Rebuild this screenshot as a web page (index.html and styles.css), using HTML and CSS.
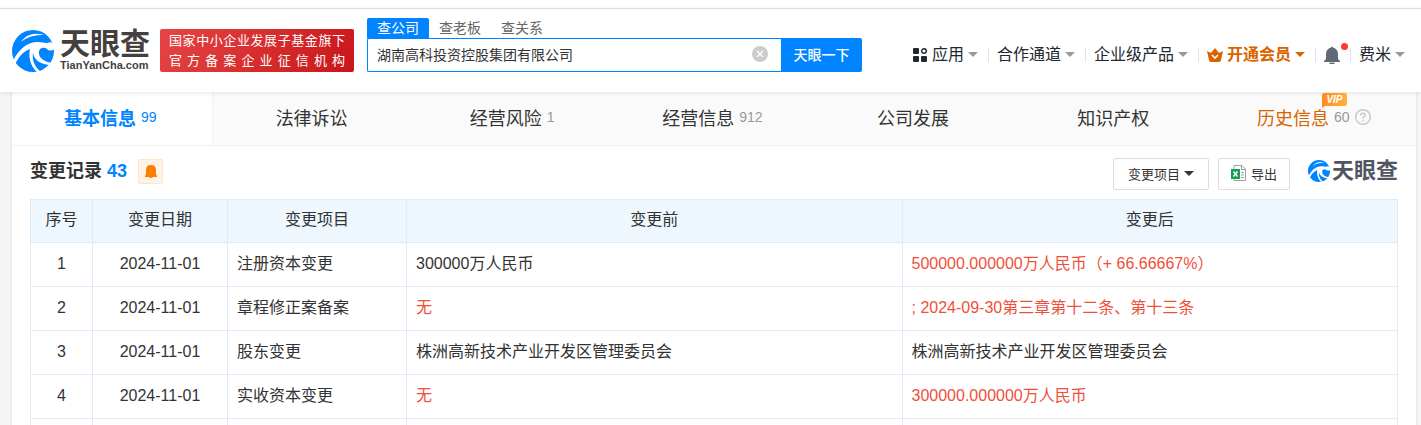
FILE: index.html
```
<!DOCTYPE html>
<html lang="zh-CN">

<head>
    <meta charset="UTF-8">
    <meta name="viewport" content="width=device-width, initial-scale=1.0">
    <title>天眼查</title>
    <link rel="stylesheet" href="styles.css">
</head>

<body>
    <!-- 公共 logo 图形 -->
    <svg class="sprite" aria-hidden="true">
        <symbol id="logo-mark" viewBox="0 0 42 42">
            <circle cx="21" cy="21" r="21" fill="#0084ff" />
            <path d="M9 12C14 4 23 2 32 5C24 5 16 6 9 12Z" fill="#fff" />
            <path d="M0 33C6 20 14 12 26 12C31 12 35 14 38 12L43 14V19C40 21 37 21 35 19C31 16 26 19 27 24C28 29 33 32 41 33L39 35C29 35 22 30 21 23C20 31 23 37 29 42L26 43C19 37 16 28 18 19C12 21 6 27 3 35Z" fill="#fff" />
        </symbol>
    </svg>

    <header class="header">
        <a href="#" class="logo">
            <svg class="logo-mark"><use href="#logo-mark" /></svg>
            <span class="logo-text">
                <span class="logo-name">天眼查</span>
                <span class="logo-domain">TianYanCha.com</span>
            </span>
        </a>
        <div class="slogan">
            <div>国家中小企业发展子基金旗下</div>
            <div>官方备案企业征信机构</div>
        </div>

        <form class="search">
            <div class="search-tabs">
                <a href="#" class="active">查公司</a>
                <a href="#">查老板</a>
                <a href="#">查关系</a>
            </div>
            <div class="search-row">
                <div class="search-box">
                    <input type="text" aria-label="查公司" value="湖南高科投资控股集团有限公司">
                    <button type="button" class="clear" aria-label="清除">
                        <svg viewBox="0 0 16 16">
                            <circle cx="8" cy="8" r="8" fill="#ccc" />
                            <path d="M5 5L11 11M11 5L5 11" stroke="#fff" stroke-width="1.3" />
                        </svg>
                    </button>
                </div>
                <button type="button" class="search-button">天眼一下</button>
            </div>
        </form>

        <nav class="nav">
            <a href="#">
                <svg class="nav-icon" viewBox="0 0 14 14">
                    <rect width="6" height="6" rx="1" fill="#222730" />
                    <rect y="8" width="6" height="6" rx="1" fill="#222730" />
                    <rect x="8" y="8" width="6" height="6" rx="1" fill="#222730" />
                    <circle cx="11" cy="3" r="2.3" fill="none" stroke="#222730" stroke-width="1.4" />
                </svg>应用<i class="caret"></i></a>
            <a href="#">合作通道<i class="caret"></i></a>
            <a href="#">企业级产品<i class="caret"></i></a>
            <a href="#" class="vip">
                <svg class="crown" viewBox="0 0 16 14">
                    <path d="M0 3L4 5L8 0L12 5L16 3L14 12Q14 14 12 14H4Q2 14 2 12Z" fill="#d86400" />
                    <path d="M5 7L8 10L11 7" fill="none" stroke="#fff" stroke-width="1.6" />
                </svg>开通会员<i class="caret"></i></a>
            <a href="#" class="bell" aria-label="消息">
                <svg viewBox="0 0 16 18">
                    <path d="M7 1.5Q8-.5 9 1.5Q14 3 14 8V13L16 15V16H0V15L2 13V8Q2 3 7 1.5Z" fill="#606a75" />
                    <path d="M5.500 17.3H10.5" stroke="#606a75" stroke-width="1.4" />
                </svg>
                <span class="dot"></span>
            </a>
            <a href="#">费米<i class="caret"></i></a>
        </nav>
    </header>

    <main class="content">
        <div class="tabs">
            <a href="#" class="active">基本信息<small>99</small></a>
            <a href="#">法律诉讼</a>
            <a href="#">经营风险<small>1</small></a>
            <a href="#">经营信息<small>912</small></a>
            <a href="#">公司发展</a>
            <a href="#">知识产权</a>
            <a href="#" class="history"><span class="history-name">历史信息<b class="vip-badge">VIP</b></span><small>60</small>
                <svg class="help" viewBox="0 0 16 16">
                    <circle cx="8" cy="8" r="7.3" fill="none" stroke="#c4c8ce" stroke-width="1.4" />
                    <path d="M5.8 6.5Q5.8 4.2 8 4.2T10.2 6.3Q10.2 7.3 8 8.6V9.8M8 11V12.4" fill="none" stroke="#c4c8ce" stroke-width="1.4" />
                </svg>
            </a>
        </div>

        <section class="records">
            <div class="records-head">
                <h2>变更记录 <span>43</span></h2>
                <button type="button" class="remind" aria-label="提醒">
                    <svg viewBox="0 0 12 13">
                        <path d="M6 0Q11 0 11 5V9L12 11V12H8Q6 14 4 12H0V11L1 9V5Q1 0 6 0Z" fill="#ff7d00" />
                    </svg>
                </button>
                <div class="tools">
                    <button type="button" class="tool">变更项目<i class="caret"></i></button>
                    <button type="button" class="tool">
                        <svg class="excel" viewBox="0 0 16 16">
                            <path d="M3 .5H11L14.5 4V15.5H3Z" fill="#fff" stroke="#9aa0a8" />
                            <path d="M10.5 .5V4.5H14.5M10 7.5H13M10 10H13M10 12.5H13" fill="none" stroke="#9aa0a8" />
                            <rect y="4" width="9" height="10" fill="#12a150" />
                            <path d="M2.5 6.5L6.5 11.5M6.5 6.5L2.5 11.5" stroke="#fff" stroke-width="1.4" />
                        </svg>导出</button>
                    <span class="brand"><svg><use href="#logo-mark" /></svg>天眼查</span>
                </div>
            </div>

            <table>
                <colgroup>
                    <col class="col-num">
                    <col class="col-date">
                    <col class="col-item">
                    <col>
                    <col>
                </colgroup>
                <thead>
                    <tr>
                        <th>序号</th>
                        <th>变更日期</th>
                        <th>变更项目</th>
                        <th>变更前</th>
                        <th>变更后</th>
                    </tr>
                </thead>
                <tbody>
                    <tr>
                        <td>1</td>
                        <td>2024-11-01</td>
                        <td>注册资本变更</td>
                        <td>300000万人民币</td>
                        <td><em>500000.000000万人民币（+ 66.66667%）</em></td>
                    </tr>
                    <tr>
                        <td>2</td>
                        <td>2024-11-01</td>
                        <td>章程修正案备案</td>
                        <td><em>无</em></td>
                        <td><em>; 2024-09-30第三章第十二条、第十三条</em></td>
                    </tr>
                    <tr>
                        <td>3</td>
                        <td>2024-11-01</td>
                        <td>股东变更</td>
                        <td>株洲高新技术产业开发区管理委员会</td>
                        <td>株洲高新技术产业开发区管理委员会</td>
                    </tr>
                    <tr>
                        <td>4</td>
                        <td>2024-11-01</td>
                        <td>实收资本变更</td>
                        <td><em>无</em></td>
                        <td><em>300000.000000万人民币</em></td>
                    </tr>
                    <tr>
                        <td></td>
                        <td></td>
                        <td></td>
                        <td></td>
                        <td></td>
                    </tr>
                </tbody>
            </table>
        </section>
    </main>
</body>

</html>
```
FILE: styles.css
```
* {
    box-sizing: border-box;
}

body {
    font-family: "Liberation Sans", "Noto Sans CJK SC", sans-serif;
    font-size: 16px;
    color: #333;
    background-color: #f5f5f5;
    margin: 0;
    padding-top: 8px;
    height: 100vh;
    overflow: hidden;
    background-image: linear-gradient(#fff, #fff);
    background-size: 100% 8px;
    background-repeat: no-repeat;
}

a {
    color: inherit;
    text-decoration: none;
}

button,
input {
    font-family: inherit;
    padding: 0;
    border: none;
    background: none;
}

button {
    cursor: pointer;
}

.sprite {
    position: absolute;
    width: 0;
    height: 0;
}

.caret {
    border: 5px solid transparent;
    border-top-color: #999;
    border-bottom: none;
}

/* header */
.header {
    position: relative;
    display: flex;
    align-items: center;
    height: 84px;
    padding: 0 16px 0 12px;
    background-color: #fff;
    border-top: 1px solid #ddd;
    box-shadow: 0 1px 4px rgba(0, 0, 0, 0.1);
}

.logo {
    display: flex;
    gap: 6px;
    color: #453f3e;
}

.logo-mark {
    width: 42px;
    height: 42px;
}

.logo-text {
    display: flex;
    flex-direction: column;
    font-weight: bold;
}

.logo-name {
    font-size: 30px;
    line-height: 28px;
}

.logo-domain {
    font-size: 11px;
    line-height: 14px;
}

.slogan {
    width: 194px;
    height: 43px;
    margin-left: 10px;
    padding: 2px 9px;
    border-radius: 2px;
    background: linear-gradient(120deg, #e64545, #c9161a);
    color: #fff;
    font-size: 13px;
    line-height: 20px;
    text-align-last: justify;
}

.search {
    width: 495px;
    margin: 0 0 12px 13px;
    font-size: 14px;
}

.search-tabs {
    display: flex;
    line-height: 20px;
    color: #666;
}

.search-tabs a {
    padding: 0 10px;
}

.search-tabs .active {
    background-color: #0084ff;
    color: #fff;
    border-radius: 2px 2px 0 0;
}

.search-row {
    display: flex;
    height: 34px;
}

.search-box {
    flex: 1;
    display: flex;
    align-items: center;
    padding: 0 13px 2px 9px;
    border: 1px solid #0084ff;
    border-right: none;
    border-radius: 2px 0 0 2px;
}

.search-box input {
    flex: 1;
    min-width: 0;
    font-size: 14px;
    color: #333;
    outline: none;
}

.clear svg {
    display: block;
    width: 16px;
    height: 16px;
}

.search-button {
    width: 81px;
    padding-bottom: 2px;
    background-color: #0084ff;
    color: #fff;
    font-size: 14px;
    font-weight: 500;
    border-radius: 0 2px 2px 0;
}

.nav {
    display: flex;
    align-items: center;
    margin-left: auto;
    margin-top: 8px;
}

.nav a {
    display: flex;
    align-items: center;
    color: #222730;
    line-height: 20px;
}

.nav a + a::before {
    content: "";
    width: 1px;
    height: 14px;
    margin: 0 8px 0 10px;
    background-color: #dde3ea;
}

.nav .caret {
    margin-left: 4px;
}

.nav-icon {
    width: 14px;
    height: 14px;
    margin-right: 5px;
}

.nav .vip {
    color: #d86400;
    font-weight: bold;
}

.vip .caret {
    border-top-color: #d86400;
}

.crown {
    width: 16px;
    height: 14px;
    margin-right: 4px;
}

.bell {
    position: relative;
}

.bell svg {
    width: 16px;
    height: 18px;
}

.dot {
    position: absolute;
    top: -3px;
    right: -8px;
    width: 7px;
    height: 7px;
    border-radius: 50%;
    background-color: #ff3b30;
}

/* company page */
.content {
    margin: 0 5px 0 12px;
    background-color: #fff;
    box-shadow: 0 0 2px rgba(0, 0, 0, 0.15);
}

.tabs {
    display: flex;
    height: 54px;
    background-color: #fafafa;
    border-bottom: 1px solid #f2f2f2;
}

.tabs a {
    flex: 1;
    display: flex;
    align-items: center;
    justify-content: center;
    gap: 5px;
    padding: 0 4px 4px 0;
    font-size: 18px;
}

.tabs small {
    font-size: 14px;
    color: #999;
}

.tabs .active {
    background-color: #fff;
    border-right: 1px solid #f0f0f0;
    color: #0084ff;
    font-weight: bold;
}

.tabs .active small {
    color: #0084ff;
    font-weight: normal;
}

.tabs .history {
    color: #d86400;
}

.history-name {
    position: relative;
}

.vip-badge {
    position: absolute;
    top: -11px;
    right: -18px;
    width: 25px;
    height: 13px;
    border-radius: 2px 2px 2px 0;
    background: linear-gradient(100deg, #ff8a1c, #ffb340);
    color: #fff;
    font-size: 10px;
    font-style: italic;
    line-height: 13px;
    text-align: center;
}

/* small tail under the badge */
.vip-badge::after {
    content: "";
    position: absolute;
    left: 0;
    top: 12px;
    border-top: 3px solid #ff8a1c;
    border-right: 4px solid transparent;
}

.help {
    width: 16px;
    height: 16px;
}

.records {
    padding: 12px 18px;
}

.records-head {
    display: flex;
    height: 41px;
}

.records-head h2 {
    margin: 0 11px 0 0;
    font-size: 18px;
    line-height: 26px;
}

.records-head h2 span {
    color: #0084ff;
}

.remind {
    display: flex;
    align-items: center;
    justify-content: center;
    width: 25px;
    height: 25px;
    margin-top: 1px;
    border: 1px solid #ffe4cc;
    border-radius: 2px;
    background-color: #fff3e8;
}

.remind svg {
    width: 12px;
    height: 13px;
}

.tools {
    display: flex;
    margin-left: auto;
}

.tool {
    display: flex;
    align-items: center;
    height: 32px;
    margin-right: 9px;
    padding: 0 14px 2px;
    border: 1px solid #ddd;
    border-radius: 2px;
    color: #333;
    font-size: 13px;
}

.tool:nth-child(2) {
    padding: 0 12px 2px;
    margin-right: 18px;
}

.tool .caret {
    margin-left: 4px;
    border-top-color: #333;
}

.excel {
    width: 16px;
    height: 16px;
    margin-right: 4px;
}

.brand {
    display: flex;
    gap: 2px;
    color: #505563;
    font-size: 22px;
    font-weight: bold;
    line-height: 26px;
}

.brand svg {
    width: 22px;
    height: 22px;
    margin-top: 2px;
}

table {
    width: 100%;
    table-layout: fixed;
    border-collapse: collapse;
}

.col-num {
    width: 62px;
}

.col-date {
    width: 135px;
}

.col-item {
    width: 179px;
}

th,
td {
    height: 44px;
    padding: 0 9px 2px;
    border: 1px solid #dfecf8;
    line-height: 24px;
    text-align: left;
}

th {
    height: 43px;
    background-color: #eef6fe;
    font-weight: normal;
    text-align: center;
}

td:nth-child(-n+2) {
    text-align: center;
}

em {
    color: #f04f3a;
    font-style: normal;
}
```
